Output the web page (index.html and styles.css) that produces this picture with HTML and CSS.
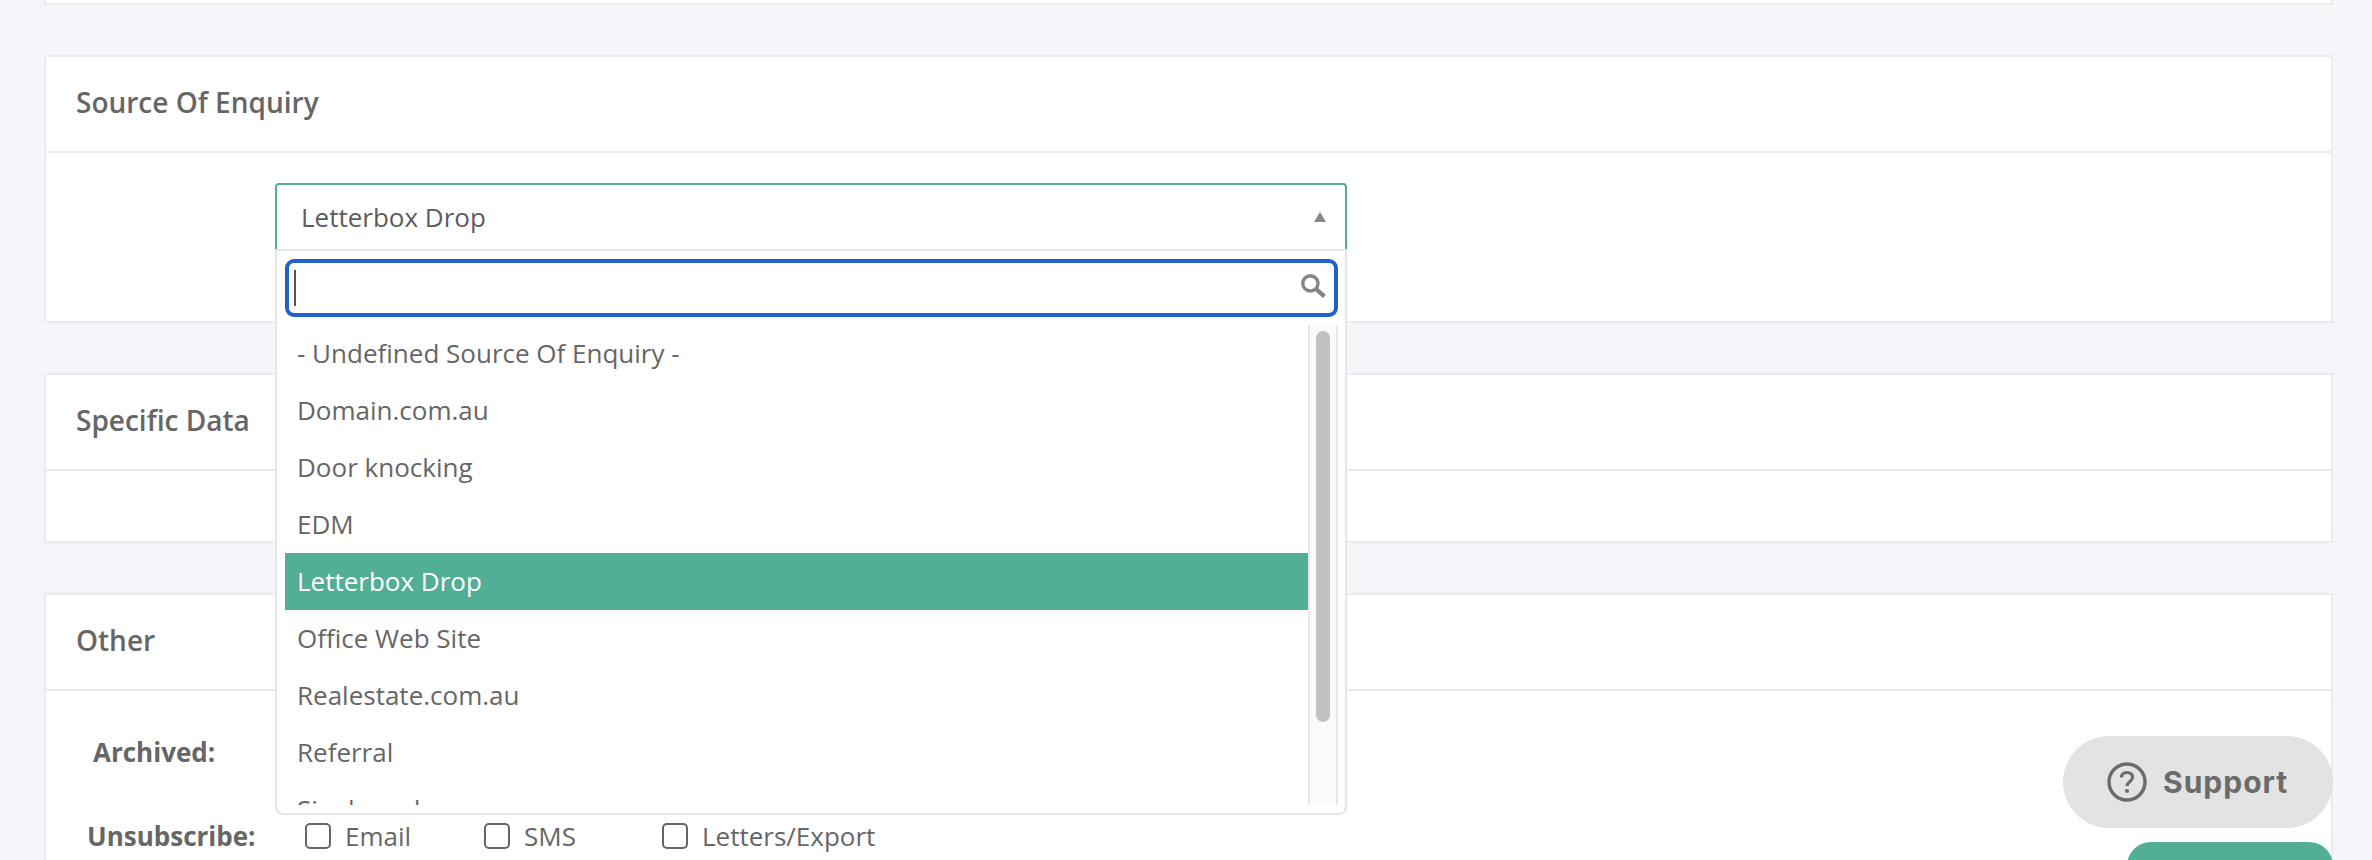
FILE: index.html
```html
<!DOCTYPE html>
<html lang="en">
<head>
<meta charset="utf-8">
<title>Source Of Enquiry</title>
<link rel="stylesheet" href="styles.css">
</head>
<body>
<main class="page">
  <section class="card card-stub"></section>

  <section class="card card-source">
    <header class="card-head"><h2>Source Of Enquiry</h2></header>
    <div class="card-body source-body">
      <div class="select">
        <div class="select-value">
          <span>Letterbox Drop</span>
          <span class="arrow"></span>
        </div>
        <div class="dropdown">
          <div class="search">
            <span class="caret"></span>
            <svg class="search-icon" viewBox="0 0 24 24" width="25" height="25" aria-hidden="true">
              <circle cx="9" cy="9" r="7.3" fill="none" stroke="#858585" stroke-width="3.2"/>
              <path d="M14.5 14.5l8 7" fill="none" stroke="#858585" stroke-width="4.2"/>
            </svg>
          </div>
          <div class="list-row">
            <ul class="options">
              <li>- Undefined Source Of Enquiry -</li>
              <li>Domain.com.au</li>
              <li>Door knocking</li>
              <li>EDM</li>
              <li class="active">Letterbox Drop</li>
              <li>Office Web Site</li>
              <li>Realestate.com.au</li>
              <li>Referral</li>
              <li>Signboard</li>
            </ul>
            <div class="track"><div class="thumb"></div></div>
          </div>
        </div>
      </div>
    </div>
  </section>

  <section class="card card-specific">
    <header class="card-head"><h2>Specific Data</h2></header>
    <div class="card-body specific-body"></div>
  </section>

  <section class="card card-other">
    <header class="card-head"><h2>Other</h2></header>
    <div class="card-body other-body">
      <div class="row row-archived"><label class="row-label label-archived">Archived:</label></div>
      <div class="row row-unsub">
        <label class="row-label label-unsub">Unsubscribe:</label>
        <label class="check check-email"><input type="checkbox"><span>Email</span></label>
        <label class="check check-sms"><input type="checkbox"><span>SMS</span></label>
        <label class="check"><input type="checkbox"><span>Letters/Export</span></label>
      </div>
    </div>
  </section>
</main>

<button class="support" type="button">
  <svg viewBox="0 0 40 40" width="40" height="40" aria-hidden="true">
    <circle cx="20" cy="20" r="18" fill="none" stroke="#6b6b6b" stroke-width="3.4"/>
    <path d="M14.5 15.5c0-3.2 2.4-5 5.5-5s5.5 1.9 5.5 4.8c0 4.5-5.5 4.2-5.5 8.7" fill="none" stroke="#6b6b6b" stroke-width="3.2"/>
    <circle cx="20" cy="29" r="2.1" fill="#6b6b6b"/>
  </svg>
  <span>Support</span>
</button>
<div class="save"></div>
</body>
</html>
```
FILE: styles.css
```css
* { box-sizing: border-box; }
html, body { margin: 0; height: 860px; overflow: hidden; }
body {
  background: #f4f6fa;
  color: #666;
  font-family: "Open Sans", sans-serif;
  font-size: 26px;
  position: relative;
}
.page { padding: 0 39px 0 44px; }
.card {
  background: #fff;
  border: 2px solid #e9ebee;
  margin-bottom: 50px;
}
.card-stub { height: 5px; border-top: 0; margin-bottom: 50px; }
.card-source { height: 268px; }
.card-specific { height: 170px; margin-bottom: 50px; }
.card-other { height: 400px; margin-bottom: 0; }
.card-head {
  height: 96px;
  border-bottom: 2px solid #e9ebee;
  display: flex;
  align-items: center;
  padding: 0 0 4px 30px;
}
.card-head h2 {
  margin: 0;
  font-size: 28px;
  font-weight: 600;
  color: #666;
}
.source-body { padding: 30px 0 0 229px; }

.select { width: 1072px; position: relative; }
.select-value {
  height: 66px;
  border: 2px solid #52ae94;
  border-bottom: 0;
  border-radius: 4px 4px 0 0;
  display: flex;
  align-items: center;
  justify-content: space-between;
  padding: 0 19px 0 24px;
  color: #5c5c5c;
}
.arrow {
  width: 0;
  height: 0;
  border-left: 6px solid transparent;
  border-right: 6px solid transparent;
  border-bottom: 10px solid #888;
}
.dropdown {
  position: absolute;
  top: 66px;
  left: 0;
  width: 100%;
  height: 566px;
  background: #fff;
  border: 2px solid #e5e5e5;
  border-radius: 0 0 8px 8px;
  padding: 8px 7px 7px 8px;
  z-index: 2;
}
.search {
  height: 58px;
  border: 4px solid #2060c8;
  border-radius: 9px;
  margin-bottom: 8px;
  display: flex;
  align-items: center;
  justify-content: space-between;
  padding: 0 8px 0 5px;
}
.caret { width: 2px; height: 36px; background: #555; }
.search-icon { display: block; margin-top: -4px; }
.list-row { display: flex; height: 480px; }
.options {
  list-style: none;
  margin: 0;
  padding: 0;
  flex: 1;
  overflow: hidden;
  color: #666;
}
.options li {
  height: 57px;
  line-height: 57px;
  padding-left: 12px;
}
.options li.active { background: #52ae94; color: #fff; }
.track {
  width: 30px;
  background: #fafafa;
  border-left: 2px solid #e8e8e8;
  border-right: 2px solid #e8e8e8;
  padding: 6px 6px 0;
}
.thumb { height: 391px; background: #c1c1c1; border-radius: 8px; }

.other-body { padding-top: 33px; }
.row { display: flex; align-items: center; }
.row-label { font-weight: 700; font-size: 26px; color: #666; }
.row-archived { height: 56px; padding-left: 47px; }
.row-unsub { height: 56px; margin-top: 28px; padding-left: 41px; }
.label-unsub { width: 218px; }
.check { display: flex; align-items: center; gap: 14px; font-size: 26px; }
.check-email { width: 179px; }
.check-sms { width: 178px; }
.check input {
  appearance: none;
  width: 26px;
  height: 26px;
  margin: 0;
  border: 2px solid #666;
  border-radius: 5px;
  background: #fff;
}

.support {
  position: absolute;
  left: 2063px;
  top: 736px;
  width: 270px;
  height: 92px;
  border: 0;
  border-radius: 46px;
  background: #e3e3e3;
  color: #6b6b6b;
  display: flex;
  align-items: center;
  gap: 16px;
  padding: 0 0 0 44px;
  font-family: Inter, sans-serif;
  font-size: 30px;
  font-weight: 700;
  letter-spacing: 1px;
  z-index: 3;
}
.save {
  position: absolute;
  left: 2127px;
  top: 842px;
  width: 206px;
  height: 60px;
  border-radius: 24px;
  background: #52ae94;
  z-index: 3;
}
```
